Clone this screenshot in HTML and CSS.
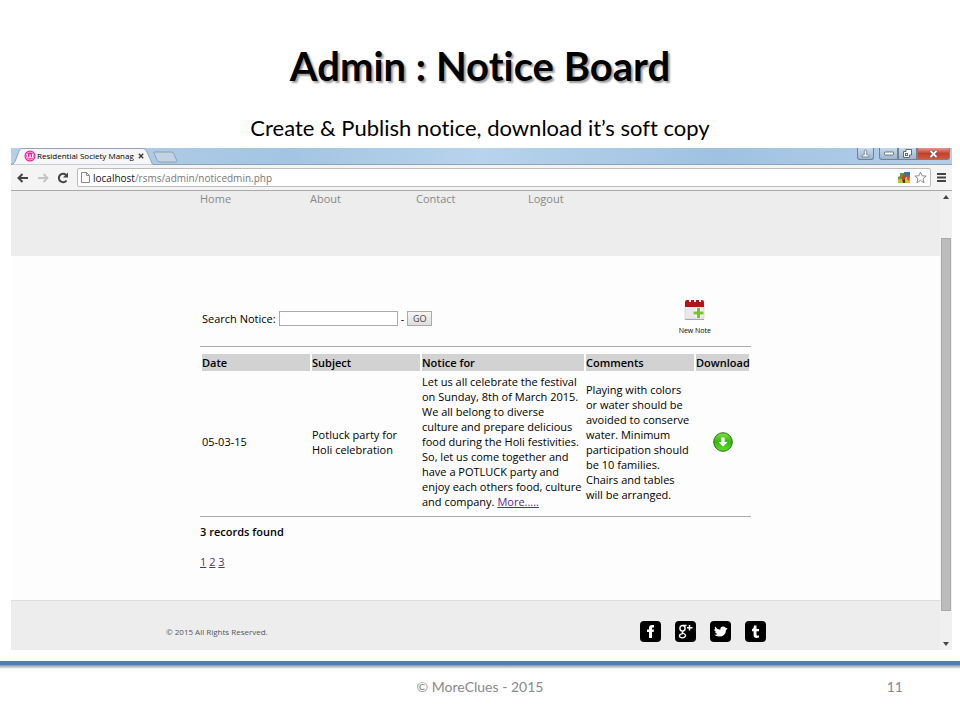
FILE: index.html
```html
<!DOCTYPE html>
<html lang="en">
<head>
<meta charset="UTF-8">
<title>Admin : Notice Board</title>
<link rel="stylesheet" href="styles.css">
</head>
<body>

<header class="slide-header">
	<h1>Admin : Notice Board</h1>
	<p>Create &amp; Publish notice, download it’s soft copy</p>
</header>

<main class="browser">
	<div class="tab-strip">
		<svg class="tab-shape" width="144" height="17" viewBox="0 0 144 17"><path d="M0 17C3 16 4 14 5 11L8 3C9 1 10 .5 12 .5H131C134 .5 135 2 136 4L140 13C141 16 142 17 144 17Z" fill="#f6f6f6" stroke="#7f93a8" stroke-width=".8"/></svg>
		<div class="tab">
			<svg class="favicon" width="12" height="12" viewBox="0 0 12 12"><circle cx="6" cy="6" r="5.5" fill="#ee1e9b"/><circle cx="6" cy="6" r="4" fill="none" stroke="#fff" stroke-width=".6"/><path d="M3.500 4V7Q3.500 8 4.700 8Q6 8 6 7V4.500V7Q6 8 7.300 8Q8.500 8 8.500 7V4" fill="none" stroke="#fff" stroke-width="1"/></svg>
			<span class="tab-title">Residential Society Manag</span>
			<button type="button" class="plain" aria-label="Close tab"><svg width="6" height="6" viewBox="0 0 6 6"><path d="M.8 .8L5.2 5.2M5.2 .8L.8 5.2" stroke="#333" stroke-width="1.3"/></svg></button>
		</div>
		<button type="button" class="plain new-tab" aria-label="New tab"><svg width="26" height="12" viewBox="0 0 26 12"><path d="M1 1H18Q20 1 21 3L24 10Q24 11 22 11H7Q5 11 4 9L1 2Z" fill="#c3d3e3" stroke="#8296ab" stroke-width=".8"/></svg></button>
		<div class="window-buttons">
			<button type="button" class="user" aria-label="User"><svg width="9" height="9" viewBox="0 0 9 9"><path d="M1 8V6.500L3.500 5.200Q2.500 1 4.500 1Q6.500 1 5.500 5.200L8 6.500V8Z" fill="#e5edf5" stroke="#6c7e90" stroke-width=".8"/></svg></button>
			<button type="button" class="min" aria-label="Minimize"><svg width="10" height="5" viewBox="0 0 10 5"><rect x=".5" y="1" width="9" height="3" rx="1" fill="#fff" stroke="#4e5e70" stroke-width=".8"/></svg></button>
			<button type="button" class="max" aria-label="Restore"><svg width="9" height="9" viewBox="0 0 9 9"><path d="M3 .5H8.500V6H6.500V8.500H.5V2.500H3Z" fill="#fff" stroke="#4e5e70" stroke-width=".9"/><rect x="2.500" y="4.500" width="2" height="2" fill="none" stroke="#4e5e70" stroke-width=".9"/></svg></button>
			<button type="button" class="close" aria-label="Close"><svg width="9" height="8" viewBox="0 0 9 8"><path d="M1.500 1L7.500 7M7.500 1L1.500 7" stroke="#555" stroke-width="3"/><path d="M1.500 1L7.500 7M7.500 1L1.500 7" stroke="#fff" stroke-width="1.800"/></svg></button>
		</div>
	</div>

	<div class="toolbar">
		<button type="button" class="plain" aria-label="Back"><svg width="12" height="10" viewBox="0 0 12 10"><path d="M11 5H2M5.500 1L1.500 5L5.500 9" fill="none" stroke="#444" stroke-width="2"/></svg></button>
		<button type="button" class="plain" aria-label="Forward"><svg width="12" height="10" viewBox="0 0 12 10"><path d="M1 5H10M6.500 1L10.500 5L6.500 9" fill="none" stroke="#c4c4c4" stroke-width="1.800"/></svg></button>
		<button type="button" class="plain" aria-label="Reload"><svg width="12" height="12" viewBox="0 0 12 12"><path d="M9.500 8.500A4.200 4.200 0 1 1 9 3" fill="none" stroke="#444" stroke-width="2"/><path d="M11 .5V5.500H6Z" fill="#444"/></svg></button>
		<div class="address">
			<svg width="9" height="11" viewBox="0 0 9 11"><path d="M.5 .5H5.500L8.500 3.500V10.500H.5ZM5.500 .5V3.500H8.500" fill="#fff" stroke="#8b8b8b"/></svg>
			<span class="url"><b>localhost</b>/rsms/admin/noticedmin.php</span>
			<svg width="13" height="12" viewBox="0 0 13 12"><path d="M2 1H7V5L5 7H0V5L2 4Z" fill="#5d9d35"/><path d="M6 0H12V5H9L7 6Z" fill="#2b75b8"/><path d="M0 7H6V11H0Z" fill="#b8c22c"/><path d="M7 6L12 5V11H6V8Z" fill="#edb32d"/><path d="M6 1L8 3 7 7 4 10 4 5Z" fill="#d3401f"/><path d="M5 8L7 7V11H5Z" fill="#164e2c"/><path d="M9 4L12 3 11 9 9 7Z" fill="#d94b20"/></svg>
			<button type="button" class="plain" aria-label="Bookmark"><svg width="13" height="13" viewBox="0 0 13 13"><path d="M6.500 1L8.100 4.800 12.200 5.100 9 7.700 10.100 11.800 6.500 9.500 2.900 11.800 4 7.700 .8 5.100 4.900 4.800Z" fill="#fff" stroke="#8e8e8e"/></svg></button>
		</div>
		<button type="button" class="plain menu" aria-label="Menu"><svg width="9" height="9" viewBox="0 0 9 9"><path d="M0 1H9M0 4.500H9M0 8H9" stroke="#444" stroke-width="2"/></svg></button>
	</div>

	<div class="viewport">
		<div class="site">
			<div class="site-header">
				<nav>
					<a href="#">Home</a>
					<a href="#">About</a>
					<a href="#">Contact</a>
					<a href="#">Logout</a>
				</nav>
			</div>

			<div class="content">
				<div class="actions">
					<form class="search">
						<label for="notice">Search Notice:</label>
						<input type="text" id="notice">
						<span>-</span>
						<button type="button">GO</button>
					</form>
					<a href="#" class="new-note">
						<svg width="22" height="22" viewBox="0 0 22 22"><rect x="1" y="5" width="19" height="15" rx="1" fill="#e9e9ec" stroke="#c9c9cd" stroke-width=".6"/><path d="M1 20.500H20" stroke="#aaa"/><path d="M1 8V3Q1 1 3 1H5V3H7V1H10V3H12V1H15V3H17V1H18Q20 1 20 3V8Z" fill="#b3141a"/><path d="M14.500 9V19M9.500 14H19.500" stroke="#fff" stroke-width="5"/><path d="M14.500 9V19M9.500 14H19.500" stroke="#76c52b" stroke-width="3"/></svg>
						<span>New Note</span>
					</a>
				</div>

				<hr>
				<table>
					<colgroup>
						<col class="col-date">
						<col class="col-subject">
						<col class="col-notice">
						<col class="col-comments">
						<col class="col-download">
					</colgroup>
					<thead>
						<tr>
							<th>Date</th>
							<th>Subject</th>
							<th>Notice for</th>
							<th>Comments</th>
							<th>Download</th>
						</tr>
					</thead>
					<tbody>
						<tr>
							<td>05-03-15</td>
							<td>Potluck party for<br>Holi celebration</td>
							<td>Let us all celebrate the festival<br>on Sunday, 8th of March 2015.<br>We all belong to diverse<br>culture and prepare delicious<br>food during the Holi festivities.<br>So, let us come together and<br>have a POTLUCK party and<br>enjoy each others food, culture<br>and company. <a href="#">More.....</a></td>
							<td>Playing with colors<br>or water should be<br>avoided to conserve<br>water. Minimum<br>participation should<br>be 10 families.<br>Chairs and tables<br>will be arranged.</td>
							<td class="download"><a href="#" aria-label="Download notice"><svg width="20" height="20" viewBox="0 0 20 20"><defs><linearGradient id="green" x2="0" y2="1"><stop offset="0" stop-color="#7ee23c"/><stop offset=".5" stop-color="#35b80c"/><stop offset="1" stop-color="#5ee226"/></linearGradient></defs><circle cx="10" cy="10" r="9.300" fill="url(#green)" stroke="#2c6b17"/><path d="M8.300 5.500H11.700V10H14.500L10 14.800 5.500 10H8.300Z" fill="#fff"/></svg></a></td>
						</tr>
					</tbody>
				</table>
				<hr>

				<p class="records">3 records found</p>
				<p class="pages"><a href="#">1</a> <a href="#">2</a> <a href="#">3</a></p>
			</div>

			<footer class="site-footer">
				<span>© 2015 All Rights Reserved.</span>
				<div class="social">
					<a href="#" aria-label="Facebook"><svg width="21" height="21" viewBox="0 0 21 21"><rect width="21" height="21" rx="4"/><path d="M9 17V11H7V8.500H9V7Q9 4 12 4H14V6.500H12.800Q12 6.500 12 7.500V8.500H14L13.700 11H12V17Z" fill="#fff"/></svg></a>
					<a href="#" aria-label="Google Plus"><svg width="21" height="21" viewBox="0 0 21 21"><rect width="21" height="21" rx="4"/><g fill="none" stroke="#fff"><ellipse cx="7.500" cy="7.300" rx="2.600" ry="2.800" stroke-width="1.400"/><path d="M8 4.500H11.500M8.500 10Q6 11 8 12Q11 13.500 10.500 15Q9.500 17 7 16.800Q4 16.500 4.500 14.500Q5 12.800 8 12.700" stroke-width="1.300"/><path d="M14.500 4V9.500M12 6.800H17.500" stroke-width="1.500"/></g></svg></a>
					<a href="#" aria-label="Twitter"><svg width="21" height="21" viewBox="0 0 21 21"><rect width="21" height="21" rx="4"/><path d="M5 5.500Q7 8.500 10.300 8.800Q10.300 5.500 13 5.500Q14.500 5.500 15.200 6.600L17.500 7.500L16 9.200Q15.500 15.500 9 15.500Q6 15.500 4 13.500Q6.500 14 7.500 13Q5.500 12.500 5 11L6 10.800Q4 10 4.200 8.300L5.300 8.600Q4.500 7 5 5.500Z" fill="#fff"/></svg></a>
					<a href="#" aria-label="Tumblr"><svg width="21" height="21" viewBox="0 0 21 21"><rect width="21" height="21" rx="4"/><path d="M9 4.500H11.500V8H14V10.300H11.500V13.500Q11.500 14.700 12.600 14.700Q13.300 14.700 14 14.300V16.300Q13 17 11.500 17Q8.600 17 8.600 14V10.300H7V8.300Q9 7.500 9 4.500Z" fill="#fff"/></svg></a>
				</div>
			</footer>
		</div>

		<div class="scrollbar">
			<svg width="6" height="4" viewBox="0 0 6 4"><path d="M0 4L3 0 6 4Z" fill="#444"/></svg>
			<div class="thumb"></div>
			<svg width="6" height="4" viewBox="0 0 6 4"><path d="M0 0H6L3 4Z" fill="#444"/></svg>
		</div>
	</div>
</main>

<footer class="slide-footer">
	<span></span>
	<span class="owner">© MoreClues - 2015</span>
	<span class="number">11</span>
</footer>

</body>
</html>
```
FILE: styles.css
```css
* {
	box-sizing: border-box;
}

body {
	margin: 0;
	background: #fff;
	color: #000;
	font-family: Lato, sans-serif;
	font-variant-ligatures: none;
}

h1, p {
	margin: 0;
}

svg {
	display: block;
	flex: none;
}

button {
	font-family: inherit;
}

.plain {
	padding: 0;
	border: 0;
	background: none;
}

.slide-header {
	padding-top: 41px;
	text-align: center;
}

.slide-header h1 {
	font-size: 40px;
	line-height: 50px;
	text-shadow: 2px 2px 2px #999;
}

.slide-header p {
	padding: 25px 0 8px;
	font-size: 22px;
	line-height: 24px;
}

/* browser window */
.browser {
	margin: 0 8px 0 11px;
}

.tab-strip {
	position: relative;
	display: flex;
	height: 17px;
	background: linear-gradient(90deg, #b5d0e8, #a3c5e3 30%, #b8d3ec 50%, #9fc2e2 75%, #b4cfe9);
	border-bottom: 1px solid #8fa3b8;
}

.tab-shape {
	position: absolute;
	left: 0;
	top: 0;
}

.tab {
	position: relative;
	display: flex;
	align-items: center;
	width: 142px;
	padding-left: 13px;
}

.tab-title {
	flex: none;
	width: 100px;
	padding-left: 1px;
	margin-right: 2px;
	font-family: "Open Sans", sans-serif;
	font-size: 8px;
	line-height: 16px;
	white-space: nowrap;
}

.new-tab {
	padding-top: 2px;
}

.window-buttons {
	display: flex;
	margin-left: auto;
	margin-right: 2px;
}

.window-buttons button {
	display: flex;
	align-items: center;
	justify-content: center;
	height: 12px;
	width: 19px;
	padding: 0;
	border: 1px solid #6f8296;
	border-top: 0;
	background: linear-gradient(#c8d9e9, #9fb6cd);
}

.window-buttons .user {
	width: 17px;
	margin-right: 5px;
	border-radius: 0 0 3px 3px;
}

.window-buttons .min {
	border-radius: 0 0 0 3px;
}

.window-buttons .close {
	width: 33px;
	border-radius: 0 0 3px 0;
	background: linear-gradient(#e49a8d, #c5402b 50%, #d4573c);
}

.toolbar {
	display: flex;
	align-items: center;
	gap: 8px;
	height: 26px;
	padding: 0 6px;
	background: #f4f4f4;
	border-bottom: 1px solid #aaa;
}

.address {
	flex: 1;
	display: flex;
	align-items: center;
	gap: 3px;
	height: 19px;
	padding: 0 3px;
	border: 1px solid #bbb;
	border-radius: 2px;
	background: #fff;
}

.url {
	flex: 1;
	color: #777;
	font-family: "Open Sans", sans-serif;
	font-size: 10px;
}

.url b {
	color: #111;
	font-weight: normal;
}

.menu {
	margin-left: -2px;
}

/* web page */
.viewport {
	display: flex;
	font-family: "Open Sans", sans-serif;
	font-size: 11px;
	line-height: 15px;
}

.site {
	flex: 1;
	background: #fdfdfd;
}

.site-header {
	height: 65px;
	background: #ededed;
}

.site-header nav {
	display: grid;
	grid-template-columns: 110px 106px 112px 1fr;
	max-width: 551px;
	margin: 0 auto;
}

.site-header a {
	color: #888;
	text-decoration: none;
}

.content {
	max-width: 551px;
	margin: 0 auto;
	padding: 43px 0 31px;
}

.actions {
	display: flex;
	align-items: center;
	justify-content: space-between;
	padding: 0 40px 8px 2px;
}

.search {
	display: flex;
	align-items: center;
	gap: 3px;
}

.search input {
	width: 119px;
	height: 15px;
	border: 1px solid #aaa;
	background: #fff;
}

.search button {
	width: 25px;
	height: 15px;
	padding: 0;
	border: 1px solid #aaa;
	background: linear-gradient(#f6f6f6, #ddd);
	color: #444;
	font-size: 9px;
	line-height: 12px;
}

.new-note {
	display: flex;
	flex-direction: column;
	align-items: center;
	gap: 2px;
	color: #000;
	font-size: 7px;
	text-decoration: none;
}

hr {
	height: 1px;
	margin: 0;
	border: 0;
	background: #aaa;
}

table {
	width: 100%;
	margin: 5px 0 4px;
	border-spacing: 2px;
	table-layout: fixed;
}

.col-date,
.col-subject,
.col-comments {
	width: 108px;
}

.col-notice {
	width: 162px;
}

th {
	height: 17px;
	padding: 0;
	background: #d2d2d2;
	font-weight: 600;
	text-align: left;
}

td {
	padding: 1px 0;
	white-space: nowrap;
}

.download svg {
	margin: 0 auto;
}

.content td a,
.pages a {
	color: #5b2a91;
}

.records {
	padding: 7px 0 15px;
	font-weight: 600;
}

.site-footer {
	display: flex;
	align-items: center;
	justify-content: space-between;
	height: 50px;
	padding: 12px 174px 0 155px;
	border-top: 1px solid #ddd;
	background: #ededed;
	color: #555;
	font-size: 8px;
}

.social {
	display: flex;
	gap: 14px;
}

.scrollbar {
	display: flex;
	flex-direction: column;
	align-items: center;
	width: 12px;
	padding: 4px 0;
	background: #f0f0f0;
}

.thumb {
	flex: 1;
	width: 10px;
	margin: 39px 0 31px;
	border: 1px solid #aaa;
	background: #bcbcbc;
}

/* bottom line of the slide */
.slide-footer {
	display: grid;
	grid-template-columns: 1fr auto 1fr;
	align-items: center;
	margin-top: 11px;
	padding: 13px 57px 16px;
	border-top: 4px solid #4f7db5;
	background: linear-gradient(#8a8fa5, #fff 4px);
	color: #898989;
	font-size: 14px;
	line-height: 18px;
}

.number {
	text-align: right;
}
```
